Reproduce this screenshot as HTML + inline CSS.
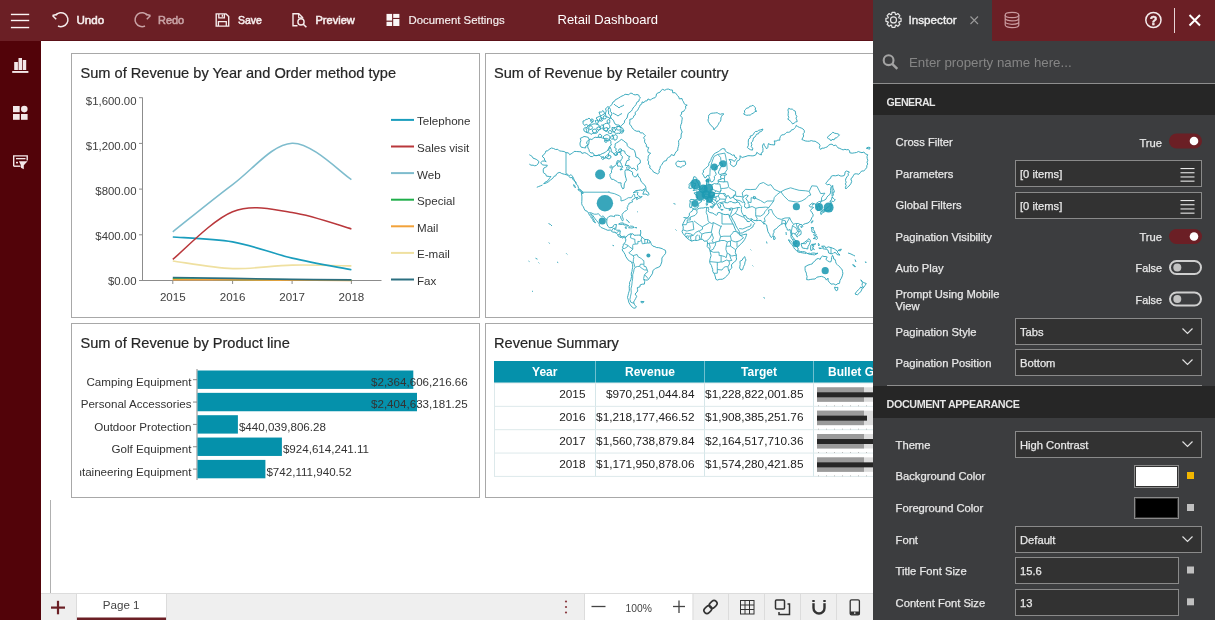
<!DOCTYPE html>
<html><head><meta charset="utf-8"><style>
html,body{margin:0;padding:0;width:1215px;height:620px;overflow:hidden;background:#fff}
svg{display:block;will-change:transform}
</style></head><body>
<svg width="1215" height="620" viewBox="0 0 1215 620" font-family="Liberation Sans">
<rect x="0" y="0" width="1215" height="620" fill="#ffffff" /><rect x="0" y="0" width="1215" height="41" fill="#6b1f25" /><rect x="41" y="40" width="832" height="1" fill="#5c1219" /><rect x="0" y="41" width="41" height="579" fill="#520309" />
<rect x="10.9" y="13.75" width="18.3" height="1.4" fill="#fbf5f5" />
<rect x="10.9" y="19.8" width="18.3" height="1.4" fill="#fbf5f5" />
<rect x="10.9" y="26.85" width="18.3" height="1.4" fill="#fbf5f5" />
<path d="M55.5 15.2 A7 7 0 1 1 58 26" fill="none" stroke="#f5ecec" stroke-width="1.5"/>
<path d="M52.5 15.5 L56.2 19.2 M52.5 15.5 L57.3 14.3" fill="none" stroke="#f5ecec" stroke-width="1.5"/>
<text x="76.5" y="24.2" font-family="Liberation Sans" font-size="11.6" fill="#f5ecec" font-weight="normal" text-anchor="start" stroke="#f5ecec" stroke-width="0.55">Undo</text>
<path d="M147.5 15.2 A7 7 0 1 0 145 26" fill="none" stroke="#c9a3a6" stroke-width="1.5"/>
<path d="M150.5 15.5 L146.8 19.2 M150.5 15.5 L145.7 14.3" fill="none" stroke="#c9a3a6" stroke-width="1.5"/>
<text x="158" y="24.2" font-family="Liberation Sans" font-size="10.95" fill="#c9a3a6" font-weight="normal" text-anchor="start" stroke="#c9a3a6" stroke-width="0.55">Redo</text>
<path d="M216.2 13.9 H226 L228.7 16.6 V26.1 H216.2 Z" fill="none" stroke="#f5ecec" stroke-width="1.4"/>
<path d="M218.8 14 V17.9 H224.4 V14" fill="none" stroke="#f5ecec" stroke-width="1.3"/>
<rect x="221.7" y="14.6" width="1.4" height="2.2" fill="#f5ecec" />
<path d="M218.4 26.1 V21.7 H226.3 V26.1" fill="none" stroke="#f5ecec" stroke-width="1.3"/>
<text x="238" y="24.2" font-family="Liberation Sans" font-size="10.5" fill="#f5ecec" font-weight="normal" text-anchor="start" stroke="#f5ecec" stroke-width="0.55">Save</text>
<path d="M297.5 25.7 H293 V13.8 H298.8 L302.6 17.6 V18.6" fill="none" stroke="#f5ecec" stroke-width="1.4"/>
<path d="M298.6 14 V17.8 H302.4" fill="none" stroke="#f5ecec" stroke-width="1.1"/>
<circle cx="301" cy="21.9" r="3.1" fill="none" stroke="#f5ecec" stroke-width="1.4"/>
<path d="M303.3 24.2 L306.4 27.2" stroke="#f5ecec" stroke-width="1.6"/>
<text x="315.5" y="24.2" font-family="Liberation Sans" font-size="11.05" fill="#f5ecec" font-weight="normal" text-anchor="start" stroke="#f5ecec" stroke-width="0.55">Preview</text>
<rect x="386.5" y="13.9" width="5.6" height="6.7" fill="#fbf6f6" />
<rect x="393.2" y="13.9" width="6.2" height="4.0" fill="#fbf6f6" />
<rect x="393.2" y="19" width="6.2" height="7" fill="#fbf6f6" />
<rect x="386.5" y="21.8" width="5.6" height="4.2" fill="#fbf6f6" />
<text x="408.5" y="24.3" font-family="Liberation Sans" font-size="11.4" fill="#f8f2f2" font-weight="normal" text-anchor="start" stroke="#f8f2f2" stroke-width="0.15">Document Settings</text>
<text x="557.5" y="23.8" font-family="Liberation Sans" font-size="13" fill="#ffffff" font-weight="normal" text-anchor="start" >Retail Dashboard</text>
<rect x="71.5" y="53.5" width="408" height="264" fill="#fff" stroke="#a8a8a8" stroke-width="1"/>
<rect x="485.5" y="53.5" width="408" height="264" fill="#fff" stroke="#a8a8a8" stroke-width="1"/>
<rect x="71.5" y="323.5" width="408" height="174" fill="#fff" stroke="#a8a8a8" stroke-width="1"/>
<rect x="485.5" y="323.5" width="408" height="174" fill="#fff" stroke="#a8a8a8" stroke-width="1"/>
<line x1="50.5" y1="500" x2="50.5" y2="593" stroke="#b0b0b0" stroke-width="1" />
<text x="80.5" y="77.8" font-family="Liberation Sans" font-size="14.6" fill="#262626" font-weight="normal" text-anchor="start" stroke="#262626" stroke-width="0.2">Sum of Revenue by Year and Order method type</text>
<text x="494" y="77.8" font-family="Liberation Sans" font-size="14.6" fill="#262626" font-weight="normal" text-anchor="start" stroke="#262626" stroke-width="0.2">Sum of Revenue by Retailer country</text>
<text x="80.5" y="347.8" font-family="Liberation Sans" font-size="14.6" fill="#262626" font-weight="normal" text-anchor="start" stroke="#262626" stroke-width="0.2">Sum of Revenue by Product line</text>
<text x="494" y="347.8" font-family="Liberation Sans" font-size="14.6" fill="#262626" font-weight="normal" text-anchor="start" stroke="#262626" stroke-width="0.2">Revenue Summary</text>
<defs><clipPath id="mapclip"><rect x="486" y="88" width="387" height="229"/></clipPath></defs>
<g clip-path="url(#mapclip)" fill="none" stroke="#33a6bb" stroke-width="0.95" stroke-linejoin="round">
<path d="M540.6 162.7L542.5 161.1L544.4 161.0L546.2 161.6L544.6 160.3L544.3 158.2L542.0 156.2L543.9 154.7L545.3 152.8L545.9 151.0L547.8 150.7L549.0 149.5L551.4 148.0L553.6 148.5L555.6 149.5L557.8 149.3L559.4 150.9L561.7 151.2L564.1 151.5L566.0 152.7L568.3 152.8L569.7 154.7L571.1 153.8L572.5 153.1L574.1 151.4L576.3 151.5L579.1 151.7L581.0 151.8L581.9 153.4L584.8 152.6L586.7 153.5L588.5 154.7L590.1 156.3L592.3 156.7L593.7 155.6L595.3 155.5L597.0 155.7L598.9 154.9L600.6 156.4L602.6 157.5L604.5 158.4L606.4 157.5L608.3 156.5L608.7 154.8L608.5 153.1L610.0 151.7L608.3 149.7L610.2 148.3L609.7 146.6L610.6 148.2L611.3 149.8L611.1 151.7L613.0 152.5L613.9 154.4L615.8 155.7L616.6 153.8L618.1 152.3L621.0 152.8L620.7 154.8L622.4 156.5L622.1 158.5L621.1 159.8L620.5 161.3L617.5 160.6L616.6 162.6L616.2 164.7L615.0 165.9L613.4 166.7L612.4 168.5L611.5 170.4L611.5 172.7L609.9 174.3L610.1 176.5L611.5 179.3L613.5 179.4L615.1 180.5L616.8 181.3L618.1 182.7L621.1 182.9L621.0 184.6L621.3 186.2L622.7 188.8L624.0 188.2L624.1 186.0L624.4 183.8L625.2 182.1L626.4 180.5L626.2 178.7L625.6 177.0L625.2 175.0L625.0 172.9L624.9 171.3L625.6 169.8L628.5 170.0L630.8 171.0L632.7 172.4L632.4 174.1L633.3 175.6L634.6 177.0L636.5 176.5L637.8 173.7L637.9 175.5L638.8 177.0L640.1 178.3L640.5 180.0L641.6 182.2L643.0 183.5L644.5 184.7L645.3 186.1L646.1 187.5L644.7 188.7L642.1 190.5L640.5 190.0L638.8 190.3L636.0 190.6L634.4 191.6L633.2 192.9L635.0 192.2L636.9 191.9L638.1 192.5L637.4 193.8L637.6 195.0L638.8 196.1L640.7 196.9L642.1 196.5L641.2 197.5L638.8 198.3L636.7 199.6L636.5 198.3L637.9 197.3L635.5 197.7L634.1 198.8L632.5 199.6L631.9 200.9L632.7 201.9L631.3 202.4L628.9 203.4L628.8 204.7L627.5 205.8L627.8 206.5L627.1 207.7L627.5 209.5L626.6 210.4L624.7 211.4L623.3 212.8L622.1 214.5L622.2 216.2L622.8 217.8L623.3 219.4L622.9 220.7L622.2 220.7L621.6 219.6L620.8 218.0L620.7 216.7L619.5 215.5L617.7 215.2L615.3 215.2L614.4 215.6L614.6 216.7L613.4 216.5L612.0 216.0L610.1 216.0L608.7 216.9L607.1 218.2L606.9 219.9L606.7 221.9L606.9 224.0L607.8 226.2L609.2 227.5L610.0 227.8L612.0 227.4L613.0 227.0L613.5 225.4L614.4 224.7L616.6 224.5L616.2 226.0L616.0 227.7L615.6 229.5L616.7 230.2L619.4 230.2L620.3 230.9L620.0 232.9L619.8 234.8L621.0 236.1L621.9 236.9L623.3 236.4L624.6 236.3L625.7 237.1L625.3 238.4L624.8 237.4L623.7 236.8L622.9 238.2L621.6 237.5L620.0 237.2L617.9 235.8L617.8 234.6L616.2 233.0L614.4 232.4L612.5 231.9L610.3 230.0L607.8 230.3L605.4 229.3L603.1 228.3L601.1 227.5L599.4 225.8L599.3 224.2L598.3 222.7L596.5 220.5L595.1 218.8L594.0 217.2L592.5 215.1L590.6 213.6L591.2 215.4L592.3 216.7L593.0 218.3L594.2 220.4L594.8 221.9L595.6 222.8L594.8 222.5L593.1 221.1L592.9 219.4L591.2 218.0L590.9 216.7L589.5 215.2L588.7 213.6L588.3 212.8L587.1 211.2L585.1 210.5L583.9 208.2L583.4 206.8L582.2 205.3L581.7 203.7L581.8 201.6L581.9 199.0L581.9 196.1L581.3 193.1L583.1 193.5L582.9 192.1L581.3 190.3L578.6 188.5L578.2 187.0L577.7 185.3L576.3 184.3L575.8 183.0L574.4 180.5L572.8 179.5L572.5 177.6L570.2 177.6L568.7 176.4L567.4 175.0L564.5 174.3L561.7 173.5L559.9 172.4L558.0 172.9L556.5 174.0L555.8 175.8L554.0 176.3L552.8 178.3L550.5 180.0L548.6 181.7L546.2 183.0L543.7 183.8L544.7 182.5L546.2 181.7L548.1 180.5L549.5 178.3L550.9 176.5L549.5 176.5L546.4 176.1L545.8 174.3L543.4 172.7L543.2 169.8L543.8 168.1L545.2 167.4L546.7 166.7L547.3 165.2L544.8 165.2L542.5 164.9L540.6 162.7ZM629.9 121.6L629.8 119.4L632.1 118.8L633.3 117.5L633.8 115.8L635.4 114.7L635.1 112.4L636.5 111.2L637.9 109.9L638.6 108.2L639.5 106.7L640.1 105.0L641.9 103.9L642.1 101.9L644.0 102.6L645.2 100.9L646.9 101.0L648.0 98.9L650.1 100.1L651.5 99.2L653.1 98.2L655.1 97.7L656.1 96.2L656.5 93.9L658.0 92.9L659.9 92.3L660.9 90.7L662.7 89.3L664.7 90.3L666.5 89.3L668.3 89.0L670.3 89.9L672.5 90.1L672.7 92.8L675.2 92.7L676.4 94.1L677.5 95.6L678.8 97.0L679.3 98.9L682.0 98.5L682.5 100.4L683.5 101.8L684.1 103.6L685.4 104.6L687.2 105.2L685.5 106.1L685.8 108.5L684.6 109.7L683.8 111.3L681.6 112.0L681.6 114.0L680.2 115.7L682.3 117.6L682.1 119.4L681.8 121.1L681.7 122.9L680.9 124.7L680.5 126.4L680.6 128.2L681.4 130.1L682.2 132.0L681.2 134.0L681.1 136.0L681.0 137.8L680.0 139.3L678.5 140.7L678.7 142.6L678.8 144.4L678.4 146.4L677.8 148.3L677.8 150.3L676.0 151.7L675.0 153.6L674.1 155.6L671.3 154.6L670.3 156.5L668.5 157.4L667.0 158.6L666.5 160.6L664.2 161.1L662.8 162.9L661.8 164.8L660.4 166.2L660.0 168.4L659.0 170.4L659.3 172.5L657.6 173.9L656.2 173.3L653.4 172.0L652.7 170.5L651.5 169.4L649.7 168.0L650.1 165.8L648.3 164.2L648.7 161.8L647.7 160.1L648.2 158.2L648.2 156.1L649.4 154.6L650.6 153.1L648.3 152.6L647.7 150.3L648.7 147.5L646.4 146.8L646.3 144.4L645.0 142.9L644.5 141.2L644.8 139.4L643.5 137.9L645.4 135.6L644.0 134.2L642.6 132.9L640.3 132.9L639.3 131.1L636.8 131.3L634.6 130.3L633.2 129.1L632.1 127.7L631.3 126.1L629.6 124.1L629.9 121.6ZM637.9 169.4L636.5 170.6L635.2 169.1L633.8 168.1L631.8 168.8L630.3 167.1L628.9 165.4L627.1 165.5L625.2 165.6L626.1 162.9L627.0 160.6L629.4 159.9L628.6 158.1L629.9 156.5L628.0 156.0L626.6 154.7L625.1 153.2L624.7 151.2L622.5 150.6L620.5 151.7L618.7 152.3L617.1 152.2L615.8 150.6L616.2 148.5L614.4 147.5L615.2 145.9L615.1 143.9L616.7 142.8L618.2 141.9L619.5 140.9L621.3 139.4L623.3 140.5L625.1 142.1L627.1 143.5L627.1 145.6L628.4 146.8L629.8 147.9L631.3 148.9L633.3 149.4L634.6 150.9L635.5 153.9L635.9 157.0L638.0 157.9L639.8 159.4L640.4 161.1L640.2 163.1L638.5 164.1L637.4 165.5L637.6 167.3L637.9 169.4ZM622.8 167.3L621.1 166.9L619.5 166.1L617.7 166.2L617.4 164.3L617.7 162.3L619.5 161.8L620.9 162.9L621.4 164.5L622.8 167.3ZM622.4 169.4L620.0 170.0L621.0 168.4L622.4 169.4ZM642.8 194.2L645.9 194.1L648.2 195.4L649.0 194.3L648.2 192.2L646.3 191.2L645.9 188.5L644.5 190.0L643.3 192.9L642.8 194.2ZM582.5 193.2L580.5 191.9L579.3 190.6L577.8 189.6L579.1 189.6L581.5 191.5L582.5 193.2ZM575.4 187.8L574.0 186.2L573.5 184.7L574.7 185.4L575.4 187.8ZM618.6 224.1L620.5 223.1L623.0 222.9L624.4 224.0L626.1 224.5L628.8 225.8L625.6 226.1L624.4 225.0L622.8 224.3L621.0 224.4L618.6 224.1ZM628.6 227.6L630.4 226.1L632.7 226.3L634.3 227.4L631.8 228.0L630.8 227.9L628.6 227.8L628.6 227.6ZM624.9 227.7L626.8 228.0L626.1 228.2L624.9 227.7ZM635.3 227.5L636.8 227.7L636.0 228.0L635.3 227.5ZM675.9 162.9L677.8 160.9L680.1 161.6L682.5 161.3L684.9 161.1L685.8 164.1L684.4 165.6L682.4 166.1L680.9 167.5L679.2 166.7L677.4 166.7L675.9 164.3L675.9 162.9ZM708.4 121.6L708.0 119.9L708.6 118.3L708.5 116.7L708.8 115.1L710.2 113.8L711.9 113.2L713.7 113.1L715.4 112.9L717.2 112.7L718.8 113.7L720.4 114.3L722.2 113.7L723.9 114.0L722.4 115.0L721.6 116.4L720.9 117.9L720.9 119.8L720.4 121.3L719.2 122.5L718.5 124.2L717.5 125.7L716.5 127.2L714.9 128.3L714.0 129.9L713.5 128.0L712.4 126.5L710.8 125.4L709.8 123.9L708.4 121.6ZM747.4 147.5L748.9 148.8L750.7 149.8L752.5 150.1L752.7 148.2L751.2 146.6L751.8 144.6L751.1 142.8L752.6 141.4L753.1 139.7L753.5 137.8L755.0 137.0L755.8 135.6L756.6 134.1L758.5 133.8L759.2 132.1L760.9 131.6L762.3 130.7L762.9 129.0L760.8 129.8L758.7 130.3L757.3 131.4L755.4 131.5L754.2 132.8L753.3 134.6L752.0 135.6L750.2 136.0L750.3 137.9L748.6 139.2L748.3 141.0L748.3 142.8L748.4 145.3L747.4 147.5ZM743.6 114.0L745.2 114.8L746.8 115.3L748.5 115.1L750.2 115.1L751.7 113.9L753.5 113.2L754.8 111.6L756.8 111.2L755.1 110.1L755.6 107.8L754.2 106.6L753.0 105.2L751.5 106.0L749.6 106.3L748.6 107.9L746.7 108.1L745.5 109.5L744.4 110.8L744.7 112.7L743.6 114.0ZM787.8 119.2L789.3 120.0L790.4 121.3L791.6 122.4L792.5 123.9L794.1 123.2L795.5 122.0L797.2 121.6L796.8 119.9L796.0 118.2L796.9 116.3L795.7 114.7L795.6 112.9L795.3 111.2L793.7 110.4L792.3 109.1L790.3 109.1L788.7 108.3L787.9 110.0L788.4 111.9L788.2 113.7L788.1 115.5L788.8 117.4L787.8 119.2ZM827.3 137.8L828.6 138.7L830.1 139.4L831.0 140.9L832.0 139.4L834.1 139.8L835.0 138.1L836.7 137.8L838.1 136.3L839.5 134.9L838.0 133.9L836.2 133.5L834.5 133.2L832.9 132.2L831.5 133.6L830.0 134.9L828.4 136.1L827.3 137.8ZM866.3 148.3L868.0 147.2L870.0 147.5L869.6 149.2L868.0 148.7L866.3 148.3ZM625.7 237.1L627.1 236.2L627.5 235.3L628.9 234.5L631.3 233.5L631.3 234.8L632.7 233.6L634.1 235.3L636.5 235.2L638.3 235.1L640.2 235.1L641.2 236.7L642.1 237.2L643.7 238.6L644.9 239.5L646.8 239.5L648.7 240.0L650.1 241.2L651.0 243.3L651.5 244.7L652.9 246.1L654.9 246.7L656.7 247.6L658.3 247.6L660.0 248.0L662.3 248.7L663.7 249.6L665.3 250.2L665.8 252.0L665.4 253.7L663.7 255.6L661.9 258.0L661.9 260.0L661.8 261.9L660.9 264.4L660.0 266.4L658.1 267.4L655.7 268.3L654.3 269.4L652.9 270.5L652.6 273.2L651.0 275.9L649.9 277.2L649.1 278.7L647.7 280.1L645.4 280.0L643.6 279.2L644.7 281.3L644.4 284.1L642.2 284.2L640.2 284.9L639.9 286.9L637.4 287.5L637.4 289.4L637.9 289.8L637.1 292.0L635.0 294.0L636.7 296.3L635.7 298.4L634.6 300.4L633.6 302.0L634.3 304.2L635.3 305.6L636.5 307.0L635.0 308.2L633.2 307.9L630.8 305.7L629.9 304.2L628.9 302.6L628.5 300.9L628.1 299.2L627.5 297.5L628.0 295.4L628.5 293.3L629.0 291.7L629.4 290.1L629.3 288.2L629.2 286.3L629.7 284.5L629.5 282.7L630.2 281.2L630.9 279.7L631.2 278.1L631.6 276.4L631.3 274.8L631.4 273.0L632.0 271.3L632.2 269.5L632.6 267.8L632.7 266.1L632.5 264.4L631.3 261.7L629.4 260.9L627.8 259.7L626.8 258.0L625.7 256.4L625.2 254.6L623.8 252.3L622.1 249.9L623.0 248.5L622.5 247.1L623.3 245.7L623.2 244.3L624.2 243.7L625.6 241.4L625.8 239.1L625.3 238.4M640.9 301.4L644.0 301.6L643.0 302.9L641.2 302.6L640.9 301.4ZM693.0 209.1L694.8 209.5L696.6 209.9L697.9 208.9L699.4 208.3L701.3 208.0L703.2 208.0L705.5 207.4L707.9 207.4L708.8 207.7L708.1 208.9L708.9 209.8L708.0 210.8L709.3 212.3L711.0 212.8L712.8 213.1L714.5 214.3L716.4 215.3L717.4 214.5L717.3 213.1L719.2 212.4L722.0 213.6L723.8 214.4L725.8 214.6L728.6 214.3L729.1 215.7L730.0 218.3L731.1 220.0L731.9 221.9L732.6 223.5L733.6 225.0L734.7 228.0L735.8 230.4L737.5 232.1L739.2 233.4L740.3 235.4L742.0 235.1L743.6 234.6L746.7 234.0L746.4 235.4L745.5 237.7L744.7 239.4L743.6 241.0L741.7 243.3L740.2 244.5L738.9 246.0L737.0 247.6L735.6 249.9L735.3 252.7L736.4 255.1L736.2 257.1L736.6 259.0L735.6 260.9L734.5 262.0L733.1 262.9L731.4 264.9L731.9 267.9L730.5 269.0L729.4 270.4L729.3 273.2L727.6 274.8L726.3 276.4L724.8 277.9L722.5 279.2L720.8 279.3L719.2 279.4L717.3 280.1L715.8 279.2L715.4 277.0L714.5 274.2L712.8 271.6L712.7 269.4L712.0 267.4L711.4 265.4L710.2 263.6L709.6 261.6L710.2 258.5L711.1 255.6L710.7 254.0L710.4 252.4L710.0 250.9L709.6 249.0L708.3 247.9L707.2 246.6L707.4 244.3L707.6 241.8L706.5 241.0L704.1 241.2L702.7 239.3L700.4 239.3L697.6 240.4L695.7 240.5L694.3 240.3L691.5 241.1L689.6 240.0L687.7 238.7L686.1 237.2L684.9 235.5L682.8 233.5L682.0 231.2L683.0 229.5L683.3 227.0L682.5 225.0L683.1 223.4L683.9 221.9L684.9 219.9L686.1 218.2L687.7 217.4L689.3 215.8L689.4 213.2L690.7 212.1L692.1 211.2L693.0 209.1ZM744.8 256.6L745.2 258.3L746.0 260.0L745.0 261.9L744.7 264.3L743.6 266.4L743.1 267.9L742.7 269.5L741.0 270.1L739.6 267.9L739.9 266.2L740.2 264.4L739.9 261.4L742.2 260.1L743.2 258.1L744.8 256.6ZM693.2 208.9L694.3 208.1L696.6 208.1L698.0 207.0L698.7 205.3L698.2 204.7L699.3 202.9L701.5 201.7L701.5 200.3L702.7 199.8L704.6 200.2L705.5 199.3L706.8 198.5L708.1 199.2L708.4 200.5L709.8 201.7L711.7 203.1L713.3 204.1L713.2 206.3L714.1 206.1L714.7 204.8L714.1 204.0L715.8 204.1L714.5 202.9L712.6 201.6L711.3 199.6L710.1 198.4L710.0 197.1L711.4 196.8L712.2 197.5L713.1 199.0L715.0 200.3L716.7 201.7L716.7 203.7L717.5 204.8L718.5 206.8L718.9 208.0L719.9 208.3L720.3 206.5L721.1 206.3L719.9 204.7L720.6 203.7L722.9 203.1L723.1 204.7L723.9 206.5L724.4 207.7L725.3 208.1L727.2 208.5L729.0 208.8L731.0 208.0L732.5 208.2L732.2 210.0L731.5 211.7L730.7 214.2L729.1 215.7L731.3 216.2L731.9 217.8L733.3 220.4L734.4 222.1L735.2 224.0L735.8 225.6L736.6 227.0L737.5 228.5L738.5 230.0L739.3 231.5L739.2 233.2L740.8 233.1L742.6 232.9L744.1 231.9L745.9 231.3L747.4 230.2L749.3 229.6L750.7 228.3L752.8 227.0L753.4 225.1L754.7 223.5L753.5 222.4L751.5 221.0L751.4 219.5L750.2 220.9L749.3 221.7L747.0 221.4L746.7 219.8L745.5 219.4L744.1 217.2L743.6 215.6L745.5 215.4L746.9 217.9L749.7 219.2L751.6 218.7L753.5 220.3L756.4 220.7L758.7 220.4L761.1 220.5L762.0 221.9L762.9 222.8L764.6 223.4L763.4 223.7L765.2 223.9L766.6 225.0L766.9 227.0L767.6 230.0L767.9 231.6L768.8 233.1L769.7 234.6L770.2 236.2L771.4 237.6L773.0 235.5L773.2 233.8L774.0 232.4L773.9 230.2L775.9 229.0L777.0 227.8L778.2 226.7L780.2 225.0L781.7 224.2L783.6 223.4L784.8 223.6L785.5 225.0L785.9 226.9L787.0 228.5L787.3 230.0L788.3 230.2L790.1 229.5L790.4 231.4L791.2 234.3L790.9 236.7L791.6 238.5L792.9 240.0L793.7 242.6L795.8 244.0L796.4 243.9L795.8 241.0L794.6 239.4L792.8 237.2L791.7 235.3L792.5 233.1L793.4 233.3L794.9 233.8L795.3 234.8L796.7 235.4L797.0 237.1L798.1 236.2L798.9 235.4L800.9 234.4L801.2 232.4L800.7 230.4L798.8 228.6L797.9 227.0L798.8 225.3L800.0 224.5L801.7 224.5L802.4 225.6L803.5 224.4L805.2 223.7L808.0 223.0L810.4 220.9L811.3 219.0L811.9 217.5L813.0 216.2L813.1 214.5L811.8 212.3L810.5 210.6L811.9 208.5L813.6 207.5L812.1 206.8L810.3 207.1L809.2 205.6L809.9 205.1L812.2 203.1L813.5 203.5L812.5 205.3L813.5 203.5L815.4 204.1L816.2 205.9L817.1 206.9L817.4 210.0L817.6 210.7L819.9 209.9L820.2 208.1L819.3 205.9L818.4 204.4L820.4 202.9L821.4 201.2L823.5 200.6L825.9 199.3L826.8 197.3L828.2 195.7L829.7 194.6L830.5 192.9L830.6 190.7L830.6 188.5L831.4 186.2L829.6 184.3L827.3 184.7L825.6 183.4L826.8 182.2L827.8 180.9L828.9 179.3L830.6 178.3L831.1 176.4L832.9 175.6L835.7 175.8L838.6 175.0L840.1 175.9L841.9 176.1L844.2 175.6L844.9 174.0L845.0 172.1L846.5 171.0L849.4 172.0L848.1 173.4L848.4 175.2L846.9 176.9L845.8 178.8L845.5 180.5L846.2 182.2L845.4 183.9L846.2 185.6L845.4 187.3L845.8 189.0L847.5 187.2L848.9 186.2L850.8 183.8L851.7 181.4L850.8 178.8L852.0 177.9L853.2 175.9L854.5 173.9L856.7 173.8L858.8 174.3L860.3 172.7L861.6 171.0L863.8 170.9L865.4 169.4L866.8 167.3L866.8 165.6L867.7 164.1L867.0 162.2L867.8 160.3L867.2 158.4L867.0 156.6L867.7 154.7L865.4 153.9L863.9 152.0L862.0 152.7L860.1 152.2L858.3 151.5L856.5 152.5L854.5 152.8L852.2 153.2L849.8 152.8L849.6 151.0L848.4 149.5L846.7 149.8L844.9 149.3L843.1 149.9L841.4 149.2L839.8 148.4L838.0 147.9L836.9 146.5L835.7 145.0L833.8 145.7L832.0 144.2L830.1 144.4L828.5 145.3L827.3 146.9L825.4 147.5L823.9 148.2L821.9 148.1L820.7 149.5L819.4 147.7L820.0 145.3L818.8 143.5L816.9 142.4L815.1 141.2L813.2 141.2L811.3 140.6L809.4 141.2L807.3 141.2L805.2 140.9L803.5 140.2L801.9 139.5L802.7 137.8L803.7 136.0L803.0 133.9L804.4 132.3L804.2 130.3L802.9 128.9L801.2 128.0L799.4 127.4L797.7 126.5L796.3 125.2L795.8 127.0L794.5 128.2L793.5 129.5L791.4 129.9L790.6 131.5L788.8 132.3L786.9 132.2L785.4 133.7L783.8 134.7L781.7 134.9L780.5 136.4L779.8 138.2L779.8 140.2L777.9 140.1L776.1 141.1L774.2 140.9L774.8 142.9L774.5 145.0L771.8 144.7L770.0 144.5L768.5 143.5L768.0 145.3L767.9 147.3L766.6 148.9L765.6 147.1L764.4 145.5L763.8 143.5L762.7 145.1L762.5 146.8L763.0 148.6L762.9 150.3L762.9 152.0L761.1 153.1L761.5 154.9L759.7 154.4L758.2 153.4L756.8 152.3L756.1 154.6L754.0 155.7L752.1 155.9L750.2 155.7L747.9 155.7L746.0 156.4L744.1 156.9L742.2 157.5L739.9 155.7L740.2 157.9L739.4 159.9L737.0 161.1L736.6 163.0L736.1 164.9L733.8 166.7L731.4 165.4L730.2 163.8L730.9 162.0L729.0 159.4L730.9 159.7L732.8 160.1L734.2 161.6L735.5 159.8L737.0 158.2L735.0 157.2L734.2 154.9L732.4 155.3L731.0 154.2L729.5 153.4L726.7 152.3L725.3 150.8L724.8 148.9L722.5 148.6L721.0 149.5L719.6 150.7L718.2 151.7L715.4 153.1L713.7 154.3L712.6 156.2L711.4 158.3L710.7 160.6L709.7 162.0L708.8 163.4L708.8 165.2L707.3 166.9L705.5 168.4L703.2 170.4L703.6 172.0L702.4 173.6L703.4 175.2L704.6 177.7L706.0 177.7L706.7 176.0L708.4 175.2L709.0 176.8L709.8 178.8L710.5 181.4L711.9 182.0L713.9 180.5L714.5 178.5L714.3 176.5L716.2 174.6L715.8 172.9L714.9 171.4L715.0 168.8L715.8 166.9L717.8 166.5L719.3 164.6L719.6 162.3L722.3 163.6L722.3 166.2L720.5 167.5L719.7 169.5L718.7 171.4L718.5 173.3L720.0 174.6L722.5 173.7L725.3 173.3L726.9 174.5L724.8 175.2L722.6 175.0L720.6 175.8L720.6 177.6L721.3 179.3L718.2 180.0L718.2 181.4L718.4 182.7L717.1 183.8L716.0 184.0L714.5 183.5L711.8 184.8L709.8 184.3L708.8 184.7L708.7 182.0L708.8 180.3L708.4 178.6L706.2 180.0L706.5 182.5L706.5 185.3L705.1 185.4L703.2 186.4L702.4 188.4L701.3 188.8L700.0 189.4L699.9 190.5L698.5 191.3L697.4 191.8L696.7 191.2L697.1 192.6L694.1 192.9L694.6 193.9L696.1 194.6L697.4 196.4L697.6 198.1L697.1 199.7L694.7 199.8L692.9 199.6L691.0 199.4L689.8 200.3L690.2 202.2L689.9 204.0L689.6 205.7L690.1 207.7L691.5 207.5L692.6 208.3L693.2 208.9ZM529.3 164.1L531.0 165.2L533.1 165.2L534.7 165.8L536.4 165.4L538.1 163.8L539.0 161.6L536.8 159.7L535.0 158.8L533.1 158.2L532.3 156.6L530.8 155.6L529.3 154.7M724.8 202.6L725.4 199.7L726.4 197.3L727.4 195.7L728.6 195.7L730.0 198.4L731.9 197.7L732.8 197.3L734.2 195.0L735.4 194.7L733.3 197.1L734.2 198.7L736.1 199.8L737.7 202.1L735.2 202.9L732.8 202.5L731.4 201.6L729.5 201.7L727.6 202.8L724.8 202.6ZM742.7 198.3L744.6 195.7L746.7 195.0L748.3 195.7L746.7 197.5L745.8 198.4L746.9 200.1L748.0 201.6L748.2 203.5L749.1 204.6L749.2 207.4L746.4 208.1L744.7 207.0L744.5 205.5L745.0 203.7L744.1 201.7L743.1 200.3L742.7 198.3ZM753.5 196.4L755.8 197.1L754.9 199.0L753.5 198.4L753.5 196.4ZM693.1 190.6L695.2 190.2L697.6 189.7L699.8 189.0L700.1 186.7L698.8 185.8L698.4 183.8L697.0 182.0L696.4 180.5L696.8 178.6L695.4 176.8L693.8 176.8L693.2 179.2L692.7 180.9L693.3 182.5L694.0 183.4L695.6 183.2L695.4 184.3L695.7 185.8L694.1 185.8L694.6 187.3L693.6 188.1L695.4 188.5L694.3 189.1L693.1 190.6ZM692.9 187.5L692.7 185.0L693.2 183.8L692.7 182.7L690.5 182.7L689.1 184.3L689.3 185.8L688.8 188.1L691.0 188.4L692.9 187.5ZM707.3 200.3L707.5 201.6L707.1 202.4L706.6 201.6L707.3 200.3ZM707.1 202.6L707.7 203.5L707.4 205.1L706.4 205.3L706.2 203.1L707.1 202.6ZM710.2 206.4L713.2 206.2L712.7 208.1L710.2 207.0L710.2 206.4ZM720.6 209.3L723.2 209.7L721.5 210.2L720.6 209.3ZM728.9 210.0L730.9 209.3L730.3 210.4L728.9 210.0ZM773.5 237.2L773.9 235.9L775.4 238.1L774.8 239.4L773.7 239.5L773.5 237.2ZM830.1 202.2L831.5 201.0L833.4 201.6L835.3 200.0L834.3 199.0L832.0 197.1L831.5 199.7L830.1 201.0L830.1 202.2ZM821.5 211.2L823.5 210.6L825.7 210.5L827.1 211.0L829.2 210.3L830.9 209.2L830.9 206.5L832.0 204.7L831.5 202.5L830.1 203.2L830.0 205.3L828.7 206.9L827.1 207.5L825.9 209.2L823.5 209.5L821.9 210.6L821.5 211.2ZM820.7 211.7L822.3 211.6L821.9 214.0L820.9 214.5L820.5 212.6L820.7 211.7ZM823.0 212.0L824.7 211.0L825.1 211.4L823.5 212.5L823.0 212.0ZM832.0 196.4L833.4 195.3L832.9 192.2L834.3 192.2L834.1 190.5L833.3 188.9L832.8 187.2L832.7 185.4L831.8 187.8L832.2 190.0L832.0 192.2L832.1 194.3L832.0 196.4ZM811.5 223.2L813.1 220.9L812.7 220.6L811.3 222.2L811.5 223.2ZM800.7 226.5L802.4 225.9L802.8 226.4L801.5 227.8L800.7 226.5ZM811.3 227.5L813.4 227.5L813.2 229.5L814.4 231.0L815.1 232.9L812.2 232.1L811.8 230.9L811.8 229.2L811.3 227.5ZM813.2 238.6L815.1 237.4L816.9 236.2L817.4 238.6L816.5 239.5L815.1 238.6L813.2 238.6ZM813.6 234.3L815.1 233.8L816.5 234.8L814.6 236.2L813.6 234.3ZM801.0 243.8L801.7 246.1L802.4 248.0L804.0 248.3L805.7 248.5L807.7 249.0L808.0 246.6L809.4 244.3L810.0 242.4L810.4 240.5L809.0 238.6L807.1 240.3L804.7 242.2L802.8 243.5L801.0 243.8ZM788.1 239.9L790.1 240.3L791.3 241.7L792.7 243.0L794.3 244.7L796.1 246.1L798.1 248.0L798.0 250.7L796.7 250.7L794.7 249.0L793.8 247.6L793.0 246.1L791.3 243.6L789.9 242.6L789.3 241.0L788.1 239.9ZM797.4 251.6L798.9 250.9L800.6 251.5L802.4 251.7L804.4 251.7L806.1 252.5L806.1 253.4L804.5 253.2L802.8 252.9L800.7 252.5L798.6 252.2L797.4 251.6ZM806.6 253.0L807.5 253.5L809.4 253.2L810.4 253.5L812.2 253.1L814.1 253.0L816.0 253.5L817.9 253.2L816.0 254.2L814.6 254.9L812.2 254.6L810.4 254.5L808.0 253.7L806.6 253.0ZM810.8 250.4L810.6 248.0L810.8 245.2L811.6 244.4L813.7 244.2L815.8 243.8L814.4 244.6L812.7 244.7L811.8 245.4L814.1 246.0L812.5 246.9L813.3 248.4L814.4 249.6L812.7 248.5L811.8 250.5L810.8 250.4ZM818.4 243.3L819.3 244.3L818.8 246.0L818.4 244.7L818.4 243.3ZM818.8 248.0L821.5 248.3L819.8 248.6L818.8 248.0ZM821.6 246.3L824.5 246.0L825.9 248.3L828.2 246.8L831.0 247.6L832.6 248.2L834.2 248.8L835.6 249.8L837.4 251.0L837.6 252.7L838.9 253.8L840.0 255.1L837.1 254.6L835.7 252.7L833.9 252.6L832.9 253.7L831.0 253.8L828.7 253.0L828.0 250.1L826.5 249.4L824.9 249.0L823.3 249.0L822.6 247.8L823.5 247.4L821.6 246.3ZM838.1 250.4L839.7 249.5L841.4 249.2L840.4 250.9L838.1 250.4ZM805.2 266.4L805.8 266.4L808.0 265.1L810.4 264.4L812.2 263.9L813.5 261.9L814.6 261.4L816.5 259.0L818.4 258.5L820.2 259.4L820.9 257.5L822.6 256.0L824.0 256.5L826.3 256.6L827.2 256.9L825.9 259.4L827.5 260.7L829.3 261.8L830.9 261.8L831.5 259.7L831.6 257.5L832.5 255.3L833.4 257.0L833.7 259.0L835.1 259.5L835.6 261.4L836.0 263.4L837.3 264.6L838.6 265.9L840.3 267.4L841.3 268.7L842.3 270.0L842.5 271.6L842.9 273.2L842.3 275.9L841.4 278.1L840.0 280.4L839.5 283.3L837.1 283.9L835.9 285.1L833.9 283.9L831.0 284.1L829.9 282.9L828.2 280.9L828.0 278.1L826.3 280.1L825.4 278.1L823.6 277.1L821.6 276.4L819.3 276.7L816.9 277.2L815.1 279.0L812.9 279.1L810.8 279.4L808.7 279.8L806.6 279.6L807.1 276.4L806.5 274.8L806.4 273.2L805.2 270.5L805.0 268.5L805.2 266.4ZM834.5 287.2L836.2 287.5L837.9 287.4L837.6 290.1L836.2 290.8L835.0 289.0L834.5 287.2ZM860.8 279.8L862.5 281.5L863.8 282.7L866.3 283.5L864.9 285.7L863.0 288.2L862.7 286.0L861.9 285.3L862.5 282.7L861.5 281.3L860.8 279.8ZM860.8 286.9L862.3 288.2L861.1 291.1L859.2 293.3L857.4 294.8L855.0 294.0L856.7 291.4L858.1 290.1L859.5 288.8L860.8 286.9ZM852.7 264.6L854.3 265.3L855.5 266.7L855.0 266.9L853.6 266.0L852.7 264.6ZM865.2 261.9L866.3 262.2L865.8 262.7L865.2 261.9ZM542.5 185.0L540.6 185.8L538.7 186.5L536.8 187.3M548.5 223.5L550.5 224.5L552.0 226.0M612.5 245.3L614.0 245.8M548.8 242.5L549.6 243.6M566.3 253.4L567.3 254.4M557.0 262.0L558.2 262.6M535.5 258.2L537.5 259.2M528.5 261.0L529.5 261.6M538.5 262.5L539.3 263.3M532.0 291.1L533.0 291.5M673.5 203.5L675.5 204.2M683.5 217.5L686.0 217.8M675.5 229.5L676.5 230.5M752.5 265.5L753.3 266.3M750.5 249.5L751.3 250.3M766.5 241.5L767.0 243.5M848.0 253.0L850.0 253.6L852.0 254.5L853.5 255.3L855.0 256.0M855.0 259.5L856.0 262.0M763.5 297.5L765.0 298.3M786.0 232.0L786.3 235.0M637.0 211.5L637.8 212.0M626.0 219.5L628.0 221.0L629.5 223.0M640.5 230.0L640.8 233.0L640.2 235.5M610.5 106.0L612.0 104.2L613.0 102.0L614.5 101.3L615.4 99.7L617.0 99.0L618.7 98.0L620.3 96.9L622.0 96.0L623.6 95.4L625.1 94.3L627.0 94.5L628.8 94.8L630.2 93.2L632.0 93.3L633.5 94.5L635.2 94.9L637.0 94.5L638.8 95.1L639.4 96.8L640.5 98.0L639.2 99.2L639.0 101.0L636.9 102.2L636.0 104.5L634.6 106.3L633.0 108.0L632.3 109.6L631.4 111.0L630.0 112.0L628.1 113.6L627.5 116.0L627.0 118.0L625.5 119.5L624.5 120.9L624.4 122.8L623.0 124.0L621.7 125.2L620.5 126.5L619.1 125.0L617.0 125.0L615.0 124.0L614.0 122.0L613.5 120.3L612.0 119.3L611.0 118.0L610.3 115.6L608.5 114.0L608.6 112.0L608.0 110.0L608.8 107.7L610.5 106.0ZM614.0 104.0L615.1 105.2L616.5 106.0L617.9 106.8L619.0 108.0L620.5 106.7L622.3 106.0L624.0 105.0M613.0 113.0L614.7 114.0L616.4 114.9L618.0 116.0L619.9 114.6L622.0 113.5M605.5 109.0L606.6 107.6L608.0 106.5L609.5 107.8L610.5 109.5L610.2 111.4L612.0 113.0L611.5 115.0L610.3 116.8L610.0 119.0L608.8 117.5L607.0 117.0L605.6 115.2L605.5 113.0L606.3 111.0L605.5 109.0ZM612.0 127.5L613.7 127.5L615.5 127.5L617.0 126.5L618.7 126.5L620.4 126.9L622.0 127.5L623.2 129.2L624.0 131.0L621.5 131.5L620.0 133.5L618.3 133.2L616.6 133.4L615.0 133.0L613.4 131.8L612.0 130.5L612.0 127.5ZM603.0 125.0L604.6 124.1L606.1 123.2L608.0 123.5L609.6 125.2L610.0 127.5L608.0 128.9L607.0 131.0L604.9 130.6L603.0 129.5L603.8 127.2L603.0 125.0ZM587.0 127.0L588.3 125.8L589.8 125.1L591.5 124.8L593.0 124.0L595.1 123.8L597.0 124.4L599.0 125.0L599.3 127.4L601.0 129.0L599.2 129.8L597.9 131.3L597.0 133.0L594.9 133.3L592.8 133.3L591.0 134.5L589.7 133.0L587.7 132.8L586.0 132.0L586.7 130.4L585.9 128.5L587.0 127.0ZM583.0 121.0L584.7 120.6L586.0 119.4L587.7 119.2L589.0 118.0L590.6 119.7L592.5 121.0L591.6 123.0L590.0 124.5L588.3 125.6L586.2 124.4L584.5 125.5L583.1 123.5L583.0 121.0ZM596.0 118.0L598.0 117.0L600.0 116.0L601.2 117.3L602.0 119.0L600.2 120.6L598.0 121.5L597.4 119.5L596.0 118.0ZM599.0 112.0L601.3 112.1L603.0 110.5L604.1 112.1L604.5 114.0L602.6 114.8L601.0 116.0L599.7 114.2L599.0 112.0ZM580.3 138.3L582.2 137.5L584.0 136.5L586.2 136.8L588.3 137.4L589.2 139.6L589.0 142.0L588.7 143.8L587.8 145.3L585.8 146.1L585.6 148.0L583.4 147.6L581.2 147.2L580.1 145.2L580.0 143.0L580.9 140.7L580.3 138.3ZM590.0 139.0L591.9 139.5L593.5 138.2L595.1 137.2L597.0 137.5L598.8 137.2L600.6 137.3L602.3 138.0L604.0 138.5L606.2 138.3L608.1 139.0L610.0 140.0L610.9 141.5L610.8 143.4L611.4 145.0L609.7 146.3L608.8 148.1L608.0 150.0L606.8 151.1L605.4 152.1L604.0 153.0L602.2 153.6L600.6 154.5L598.8 155.1L597.0 155.5L595.2 155.6L593.8 154.6L592.8 152.8L591.0 153.0L589.4 151.7L589.0 149.7L588.0 148.0L587.7 146.3L587.6 144.5L586.5 143.0L587.3 141.3L588.5 140.1L590.0 139.0ZM603.0 137.0L604.8 135.4L607.0 134.5L608.6 135.3L610.0 136.5L609.6 138.8L609.0 141.0L607.0 140.2L605.0 141.0L604.6 138.7L603.0 137.0ZM612.0 135.0L614.1 135.4L616.0 134.5L617.3 136.3L617.0 138.5L615.9 140.0L614.0 140.0L613.7 138.2L613.3 136.4L612.0 135.0ZM605.0 157.0L606.5 155.7L608.0 154.5L609.4 155.4L611.0 156.0L610.7 158.0L609.0 159.0L606.9 158.2L605.0 157.0ZM589.0 130.0L587.8 132.4L585.5 131.9L584.2 131.1L583.6 128.7L585.4 127.4L587.8 128.1L589.0 130.0ZM592.6 127.5L592.0 128.9L589.9 129.7L588.8 128.2L588.9 126.5L590.0 125.9L591.5 125.8L592.6 127.5ZM596.7 131.0L595.6 132.7L594.2 132.8L592.7 132.1L592.5 129.9L594.0 129.2L595.6 129.0L596.7 131.0ZM600.4 128.5L599.3 129.8L598.1 130.1L597.2 129.3L596.6 127.9L598.2 127.0L599.5 127.0L600.4 128.5ZM603.4 126.5L603.2 127.8L601.7 128.6L600.6 127.4L600.7 125.9L601.6 125.0L603.3 125.2L603.4 126.5ZM607.7 129.5L607.2 131.3L605.4 131.2L604.2 130.3L603.6 128.8L605.6 127.9L607.2 127.5L607.7 129.5ZM612.1 132.0L611.3 133.6L609.7 133.4L608.1 132.8L608.8 131.2L609.6 130.4L611.0 130.9L612.1 132.0ZM598.3 121.5L598.0 123.2L596.7 123.6L595.7 122.2L595.2 120.6L596.6 120.2L598.1 120.3L598.3 121.5ZM603.1 119.5L602.0 121.1L600.7 121.1L599.2 120.3L599.8 118.9L600.7 117.5L601.9 118.0L603.1 119.5ZM606.3 117.5L605.3 119.0L604.1 118.8L603.0 118.1L603.3 117.0L604.1 115.7L605.5 116.0L606.3 117.5ZM609.8 121.5L609.6 123.2L608.0 123.1L607.2 122.2L607.0 120.6L608.2 119.6L609.7 119.9L609.8 121.5ZM616.0 130.0L615.0 131.2L613.6 131.9L612.8 130.6L612.3 129.4L613.7 128.7L615.1 128.8L616.0 130.0ZM621.1 128.5L620.1 129.9L618.1 130.1L616.6 129.5L616.7 127.7L618.1 126.3L619.9 126.7L621.1 128.5ZM623.5 131.5L622.4 133.1L621.2 133.2L620.1 132.3L620.2 130.9L621.2 130.1L622.8 130.1L623.5 131.5ZM593.4 120.5L593.2 121.7L591.7 122.2L590.5 121.3L590.9 119.8L591.6 118.8L593.2 119.6L593.4 120.5ZM613.4 137.5L612.8 139.0L611.6 139.3L610.7 138.3L610.7 136.9L611.6 135.7L612.8 136.3L613.4 137.5ZM602.0 136.0L601.1 137.2L599.6 137.6L598.2 136.9L598.6 135.4L599.6 134.0L601.0 134.7L602.0 136.0ZM607.3 141.0L607.0 141.9L605.7 142.4L604.6 141.7L604.9 140.5L605.6 139.6L606.8 139.9L607.3 141.0ZM621.8 150.0L620.9 151.0L619.7 151.7L618.4 150.6L618.9 149.3L619.7 149.0L621.1 148.9L621.8 150.0ZM617.8 154.0L617.1 155.2L615.7 155.1L614.6 154.7L614.3 153.5L615.6 152.6L616.9 153.0L617.8 154.0ZM604.2 158.0L604.0 158.8L602.7 159.5L601.5 158.5L602.0 157.3L602.6 156.7L603.6 156.7L604.2 158.0ZM629.3 168.0L628.9 169.3L627.7 169.6L626.9 168.6L626.5 167.3L627.7 166.8L628.8 166.9L629.3 168.0ZM612.2 167.0L611.7 168.1L610.7 167.9L609.9 167.6L610.2 166.4L610.8 165.7L611.8 166.0L612.2 167.0Z"/>
<path d="M582.9 192.2L609.0 192.2L609.0 191.6L609.4 192.6L614.3 193.6L619.1 195.7L621.0 197.3L621.0 201.0L624.2 200.1L626.6 198.8L628.3 197.7L631.3 197.7L632.0 197.1L632.7 195.4L633.6 194.5L634.6 194.5L634.8 196.8L635.5 198.0M566.0 152.7L566.0 173.7L567.8 174.3L569.2 175.8L571.1 174.6L573.0 177.0L574.9 181.4L576.3 182.5L576.3 183.5M588.4 212.9L590.7 212.6L594.2 214.2L596.8 214.2L598.4 213.6L600.3 216.0L601.7 216.7L603.1 215.8L605.0 218.3L607.1 220.0M611.8 231.4L611.8 230.6L612.8 228.7L614.7 228.2L615.5 227.5M614.7 228.2L614.7 230.1M614.6 231.5L615.8 232.7M616.4 233.0L618.8 231.1L620.3 230.9M617.9 234.6L619.8 234.9M620.6 237.5L620.9 236.1M630.9 234.2L630.4 237.7L632.7 238.7L635.0 239.4L634.8 241.0L635.2 243.3L635.6 244.1L633.2 244.3L632.7 245.4L632.8 249.2L629.9 247.1L627.7 245.3L625.6 244.4L624.3 243.9M627.7 245.3L627.5 246.6L624.7 248.5L623.0 248.4M642.1 237.2L641.2 239.5L641.4 240.3L639.3 241.6L637.9 241.3L637.9 243.8L635.6 244.1M644.7 239.6L644.9 243.3M647.7 239.8L647.3 243.0M641.4 240.3L642.3 243.8L645.4 243.4L647.3 243.0L649.6 243.1L650.0 241.2M632.8 249.2L629.9 252.1L628.9 252.6L630.4 254.2L633.2 255.6L637.1 254.5L638.3 257.0L640.7 258.0L642.1 259.5L643.8 260.7L644.0 264.2M633.2 255.6L633.8 257.4L633.4 259.7L633.2 261.9L632.3 262.7M633.2 261.9L634.1 263.9L634.6 266.4L635.3 267.2L634.1 269.0L633.6 272.1L632.7 274.8L632.7 278.1L632.2 281.5L631.8 285.1L631.0 288.8L631.3 292.7L630.4 296.8L629.9 299.6L630.8 302.2L633.8 303.4M635.3 267.2L637.4 266.5L639.5 266.4L640.5 264.2L643.8 264.2L644.2 266.5L646.0 266.7L647.2 270.0M639.5 266.4L642.1 268.5L644.4 269.9L647.2 270.0L647.9 271.8L646.0 273.0L644.4 275.0L645.9 275.9L648.3 278.9M644.4 275.0L643.6 278.7M696.8 210.0L697.1 212.9L695.0 215.4L690.3 217.0L690.3 218.5L690.3 220.0L687.2 219.9L687.2 222.5L686.3 224.7L682.5 224.7M690.3 218.1L686.1 218.1M687.2 222.5L692.9 221.4L693.8 229.5L687.7 230.9L687.0 231.2L683.0 229.8M694.0 220.9L699.6 225.2L702.4 226.8L709.7 222.5M706.6 207.8L706.2 212.5L707.4 215.3L708.1 220.9L709.7 222.5M722.0 213.9L722.0 224.0L733.3 224.0M709.7 222.5L711.7 223.5L713.4 222.6L721.1 226.5L721.1 226.0L722.0 226.0M721.1 226.5L719.6 230.0L719.2 232.9L720.6 236.7M713.4 222.6L712.6 226.0L711.3 232.2M701.9 234.1L705.1 232.9L711.3 232.2M702.4 226.8L702.5 229.2L699.4 230.9L698.7 231.0M693.3 235.4L695.7 232.4L698.7 231.0L701.9 234.1M706.5 241.0L709.8 238.1L712.1 233.8L711.3 232.2M712.1 233.8L712.6 235.8L713.5 238.1L712.1 240.5M712.1 240.5L713.5 243.1L715.9 241.9L719.2 241.2L721.1 240.5L724.4 240.5M720.6 236.7L723.9 236.2L730.5 236.2M719.2 241.2L720.6 236.7M715.9 241.9L715.1 246.1L714.0 247.1L713.5 249.0L710.0 250.9M710.0 250.9L713.5 252.3L719.0 252.1L719.2 255.6L721.1 255.6L724.8 256.6L726.2 257.8L727.2 253.2M724.4 240.5L727.4 241.9L726.2 246.3L725.9 249.4L727.2 253.2M730.5 236.2L731.4 240.5L735.2 241.9L737.8 241.4L739.9 240.6L743.6 237.7L738.9 234.3L738.0 233.4L736.1 231.4L733.3 231.6L732.8 232.9L730.5 235.3L730.5 236.2M737.0 246.8L737.0 242.4L737.8 241.4M735.3 249.5L730.5 246.1L730.5 241.0L731.4 240.5M727.4 241.9L730.5 241.0M726.2 246.3L730.5 246.1M736.5 255.1L731.4 256.1L729.5 254.2L727.2 253.2M729.5 254.2L730.9 259.0L731.9 260.4L729.0 260.9M722.0 262.2L726.7 260.0L729.0 260.9M709.6 261.6L718.1 262.4L721.1 261.9L722.0 262.2M721.1 255.6L721.1 261.9M717.3 262.4L717.3 266.4L717.3 269.5M714.0 273.3L717.3 273.2L717.3 269.5L722.0 270.0L723.9 267.4L725.8 266.6L727.9 266.8L728.6 271.0L729.4 271.5M727.9 266.8L729.5 263.9L729.0 260.9M691.5 241.1L690.5 238.1L691.0 235.8L693.3 235.4M695.7 240.5L695.9 236.2L698.0 234.8M700.0 239.5L699.0 234.9M701.0 239.2L701.9 234.1M687.7 238.7L688.2 237.2L689.1 237.2M686.1 237.2L686.8 235.8L688.6 236.2L691.0 235.8M684.9 235.5L685.5 233.2L687.7 233.4L690.5 233.8L693.3 235.4M707.6 244.3L709.1 243.1L711.0 243.1L713.5 243.1M709.1 243.1L710.2 247.1L709.6 249.0M690.1 201.6L692.4 202.2L691.9 204.7L691.5 207.5M696.8 199.8L701.5 201.1M700.9 189.1L702.4 190.8L704.2 191.5L706.2 192.2L705.5 194.2L704.1 196.1L705.1 196.5L705.5 199.3M705.5 194.2L707.4 194.2L708.4 195.3L707.0 196.7L705.1 196.5M705.1 185.4L704.2 188.1L704.1 189.7L704.2 191.5M701.7 188.8L704.1 189.3M706.7 183.2L707.8 183.4M711.8 184.8L712.2 187.0L712.6 189.3L711.9 189.3L709.9 190.3L710.7 192.8L707.9 194.3L707.4 194.2M710.7 192.8L712.6 192.2L714.5 192.8L715.9 190.8L712.6 189.3M715.9 190.8L719.6 192.1M708.4 195.3L711.3 195.7L713.7 195.3L714.5 192.8M717.1 184.0L719.9 184.0L720.6 187.8L721.1 190.0L719.6 192.1M718.2 181.4L723.4 181.9M721.3 178.3L724.4 178.8M724.8 175.2L724.4 178.8L724.8 181.4L723.4 181.9L727.6 181.7L728.6 186.2L727.6 187.8L723.9 188.4L721.1 188.4M721.1 190.0L719.6 193.4L722.9 193.6L724.8 193.4L726.7 196.7M728.6 187.3L731.4 189.3L735.6 191.5L735.6 194.3M713.7 195.3L714.5 193.6L719.6 193.4L718.2 196.1L715.4 196.7L713.7 195.3M719.9 199.0L725.3 199.3M723.4 193.4L725.0 196.4L726.4 197.3M718.2 196.1L719.6 198.4L719.9 199.0M711.3 197.1L714.0 195.7M713.3 197.5L716.4 197.7L715.4 201.0M716.8 201.0L718.2 201.2L719.9 199.0M717.3 204.5L719.2 202.8L723.0 202.0L724.8 201.6M716.7 201.7L718.2 201.2M709.8 176.1L710.0 172.4L710.2 168.4L711.7 162.9L714.0 156.5L717.8 154.4L720.6 157.5L721.1 162.3M717.8 154.4L724.8 153.1L725.8 157.0L726.7 162.9L727.2 169.4L724.6 173.3M735.6 194.3L736.1 196.4L739.9 196.4L743.1 197.1L742.2 192.9L745.5 189.3L750.2 189.6L755.8 189.3L759.6 183.8L763.4 182.5L768.1 185.4L770.9 184.7L774.2 189.3L780.3 192.1M780.3 192.1L785.0 189.6L790.6 187.8L794.4 189.0L799.1 190.3L805.7 190.8L808.5 191.3L809.2 191.5L811.8 185.8L816.9 186.2L820.7 193.6L824.9 193.2L821.6 197.7L821.4 201.2M781.0 191.9L783.6 195.7L788.7 200.7L797.2 202.2L801.9 200.9L806.1 198.4L808.5 195.7L810.8 195.0L809.2 191.5M780.3 192.1L776.5 195.0L774.2 197.7L773.7 201.0L768.8 207.5M748.1 202.2L751.1 202.5L751.1 197.7L755.8 198.4L760.5 200.5L764.3 202.9L767.1 201.0L773.7 201.0M749.2 207.4L752.1 206.5L755.8 208.3L759.1 207.5L762.0 207.4L765.7 207.1L768.8 207.5M755.7 215.8L760.5 216.2L763.8 214.0L765.2 211.2L768.8 207.5M755.8 208.3L755.7 211.2L755.7 215.8L757.2 218.5L756.4 220.7M739.9 204.5L741.7 206.5L741.3 209.5L741.7 212.3L743.6 215.6M732.3 208.9L738.0 207.5L740.3 207.6M735.2 213.4L742.2 216.7L743.6 217.2M731.4 216.2L735.2 213.4M738.0 207.5L737.0 210.6L735.2 213.4M739.2 228.5L742.7 229.0L747.4 227.0L750.7 226.0L751.1 223.5M737.7 202.1L739.4 202.8L739.9 204.5M736.1 199.8L739.9 200.7L742.7 202.5L744.1 201.7M762.9 222.2L765.2 221.4L764.3 218.0L766.2 216.2L769.0 212.9L768.5 210.0L771.6 209.5M771.6 209.5L772.8 212.9L774.6 215.6L777.5 218.3L781.2 219.4L785.0 218.0L789.7 217.8M781.7 224.2L782.2 219.9L785.5 220.9L785.5 225.0M785.5 225.0L787.3 221.9L789.7 217.8M789.7 217.8L791.1 220.9L793.6 224.4M793.6 224.4L795.3 223.5L798.6 223.5L800.0 224.5M791.2 235.8L791.6 230.0L792.5 225.7L793.6 224.4M792.5 225.7L796.3 228.2L797.7 231.4M794.9 233.8L797.7 231.4L799.5 231.4M796.3 224.0L797.2 227.5L799.5 231.4M796.7 235.4L799.5 231.4M792.6 239.1L794.4 239.5M815.4 204.1L818.8 201.6L821.4 201.2M817.4 206.8L819.1 205.8M801.5 243.4L805.7 243.8L807.1 241.4L809.1 241.2M831.0 247.6L831.0 253.8" stroke-width="0.85"/>
</g>
<g fill="#1c9ab2" fill-opacity="0.88">
<circle cx="604.9" cy="203.2" r="8.2"/>
<circle cx="600.1" cy="174.5" r="5.0"/>
<circle cx="602.3" cy="221.0" r="3.6"/>
<circle cx="648.4" cy="255.4" r="2.0"/>
<circle cx="825.2" cy="270.7" r="3.6"/>
<circle cx="796.4" cy="206.7" r="3.6"/>
<circle cx="828.6" cy="207.6" r="5.0"/>
<circle cx="819.0" cy="207.0" r="4.0"/>
<circle cx="796.4" cy="243.7" r="3.6"/>
<circle cx="695.5" cy="184.0" r="5.3"/>
<circle cx="703.2" cy="188.9" r="4.5"/>
<circle cx="708.6" cy="188.4" r="4.5"/>
<circle cx="700.3" cy="195.7" r="4.8"/>
<circle cx="706.1" cy="194.7" r="4.5"/>
<circle cx="711.5" cy="194.7" r="3.5"/>
<circle cx="709.5" cy="199.5" r="3.5"/>
<circle cx="707.6" cy="180.7" r="2.0"/>
<circle cx="695.0" cy="203.4" r="3.5"/>
<circle cx="714.4" cy="167.1" r="3.5"/>
<circle cx="723.1" cy="163.7" r="3.5"/>
</g>
<line x1="142.5" y1="97.5" x2="142.5" y2="281" stroke="#8c8c8c" stroke-width="1" />
<line x1="142" y1="280.5" x2="381.5" y2="280.5" stroke="#8c8c8c" stroke-width="1" />
<line x1="139" y1="97.69999999999999" x2="142.5" y2="97.69999999999999" stroke="#8c8c8c" stroke-width="1" />
<text x="136.5" y="105.39999999999999" font-family="Liberation Sans" font-size="11.4" fill="#404040" font-weight="normal" text-anchor="end" >$1,600.00</text>
<line x1="139" y1="143.4" x2="142.5" y2="143.4" stroke="#8c8c8c" stroke-width="1" />
<text x="136.5" y="150.4" font-family="Liberation Sans" font-size="11.4" fill="#404040" font-weight="normal" text-anchor="end" >$1,200.00</text>
<line x1="139" y1="189.1" x2="142.5" y2="189.1" stroke="#8c8c8c" stroke-width="1" />
<text x="136.5" y="195.4" font-family="Liberation Sans" font-size="11.4" fill="#404040" font-weight="normal" text-anchor="end" >$800.00</text>
<line x1="139" y1="234.8" x2="142.5" y2="234.8" stroke="#8c8c8c" stroke-width="1" />
<text x="136.5" y="240.4" font-family="Liberation Sans" font-size="11.4" fill="#404040" font-weight="normal" text-anchor="end" >$400.00</text>
<line x1="139" y1="280.5" x2="142.5" y2="280.5" stroke="#8c8c8c" stroke-width="1" />
<text x="136.5" y="285.40000000000003" font-family="Liberation Sans" font-size="11.4" fill="#404040" font-weight="normal" text-anchor="end" >$0.00</text>
<line x1="172.8" y1="280.5" x2="172.8" y2="284" stroke="#8c8c8c" stroke-width="1" />
<text x="172.8" y="301.4" font-family="Liberation Sans" font-size="11.6" fill="#404040" font-weight="normal" text-anchor="middle" >2015</text>
<line x1="232.6" y1="280.5" x2="232.6" y2="284" stroke="#8c8c8c" stroke-width="1" />
<text x="232.6" y="301.4" font-family="Liberation Sans" font-size="11.6" fill="#404040" font-weight="normal" text-anchor="middle" >2016</text>
<line x1="292.1" y1="280.5" x2="292.1" y2="284" stroke="#8c8c8c" stroke-width="1" />
<text x="292.1" y="301.4" font-family="Liberation Sans" font-size="11.6" fill="#404040" font-weight="normal" text-anchor="middle" >2017</text>
<line x1="351.4" y1="280.5" x2="351.4" y2="284" stroke="#8c8c8c" stroke-width="1" />
<text x="351.4" y="301.4" font-family="Liberation Sans" font-size="11.6" fill="#404040" font-weight="normal" text-anchor="middle" >2018</text>
<path d="M172.8 261.0 C182.8 262.2 212.7 267.9 232.6 268.6 C252.5 269.3 272.3 265.5 292.1 265.1 C311.9 264.6 341.5 265.7 351.4 265.9" fill="none" stroke="#efe0a0" stroke-width="1.6"/>
<path d="M172.8 278.8 C182.8 278.9 212.7 279.2 232.6 279.4 C252.5 279.5 272.3 279.8 292.1 279.9 C311.9 280.1 341.5 280.2 351.4 280.3" fill="none" stroke="#1fae4a" stroke-width="1.6"/>
<path d="M172.8 279.6 C182.8 279.6 212.7 279.7 232.6 279.8 C252.5 279.9 272.3 280.0 292.1 280.2 C311.9 280.3 341.5 280.4 351.4 280.5" fill="none" stroke="#f2a23a" stroke-width="1.6"/>
<path d="M172.8 277.5 C182.8 277.7 212.7 278.1 232.6 278.4 C252.5 278.7 272.3 279.1 292.1 279.4 C311.9 279.6 341.5 279.8 351.4 279.9" fill="none" stroke="#2b6f80" stroke-width="1.6"/>
<path d="M172.8 237.0 C182.8 237.8 212.7 238.4 232.6 241.9 C252.5 245.4 272.3 253.5 292.1 258.1 C311.9 262.8 341.5 267.8 351.4 269.8" fill="none" stroke="#1a9dbd" stroke-width="1.6"/>
<path d="M172.8 259.4 C182.8 251.4 212.7 219.5 232.6 211.7 C252.5 203.9 272.3 209.7 292.1 212.5 C311.9 215.4 341.5 226.1 351.4 228.9" fill="none" stroke="#b9373b" stroke-width="1.6"/>
<path d="M172.8 231.8 C182.8 224.0 212.7 199.4 232.6 184.6 C252.5 169.9 272.3 144.0 292.1 143.2 C311.9 142.3 341.5 173.5 351.4 179.6" fill="none" stroke="#7ebccd" stroke-width="1.6"/>
<line x1="391" y1="119.9" x2="414" y2="119.9" stroke="#1a9dbd" stroke-width="2" />
<text x="417" y="125.4" font-family="Liberation Sans" font-size="11.6" fill="#333333" font-weight="normal" text-anchor="start" >Telephone</text>
<line x1="391" y1="146.5" x2="414" y2="146.5" stroke="#b9373b" stroke-width="2" />
<text x="417" y="152.0" font-family="Liberation Sans" font-size="11.6" fill="#333333" font-weight="normal" text-anchor="start" >Sales visit</text>
<line x1="391" y1="173.10000000000002" x2="414" y2="173.10000000000002" stroke="#7ebccd" stroke-width="2" />
<text x="417" y="178.60000000000002" font-family="Liberation Sans" font-size="11.6" fill="#333333" font-weight="normal" text-anchor="start" >Web</text>
<line x1="391" y1="199.70000000000002" x2="414" y2="199.70000000000002" stroke="#1fae4a" stroke-width="2" />
<text x="417" y="205.20000000000002" font-family="Liberation Sans" font-size="11.6" fill="#333333" font-weight="normal" text-anchor="start" >Special</text>
<line x1="391" y1="226.3" x2="414" y2="226.3" stroke="#f2a23a" stroke-width="2" />
<text x="417" y="231.8" font-family="Liberation Sans" font-size="11.6" fill="#333333" font-weight="normal" text-anchor="start" >Mail</text>
<line x1="391" y1="252.9" x2="414" y2="252.9" stroke="#efe0a0" stroke-width="2" />
<text x="417" y="258.4" font-family="Liberation Sans" font-size="11.6" fill="#333333" font-weight="normal" text-anchor="start" >E-mail</text>
<line x1="391" y1="279.5" x2="414" y2="279.5" stroke="#2b6f80" stroke-width="2" />
<text x="417" y="285.0" font-family="Liberation Sans" font-size="11.6" fill="#333333" font-weight="normal" text-anchor="start" >Fax</text>
<line x1="197" y1="369" x2="197" y2="480" stroke="#888" stroke-width="1" />
<defs><clipPath id="c3"><rect x="80" y="324" width="399" height="173"/></clipPath></defs>
<g clip-path="url(#c3)">
<rect x="197.5" y="370.5" width="215.8" height="18.4" fill="#0591ab" />
<line x1="193" y1="379.7" x2="197" y2="379.7" stroke="#888" stroke-width="1" />
<text x="191.5" y="386.1" font-family="Liberation Sans" font-size="11.6" fill="#333333" font-weight="normal" text-anchor="end" >Camping Equipment</text>
<text x="371" y="386.1" font-family="Liberation Sans" font-size="11.6" fill="#333333" font-weight="normal" text-anchor="start" >$2,364,606,216.66</text>
<rect x="197.5" y="392.85" width="219.5" height="18.4" fill="#0591ab" />
<line x1="193" y1="402.05" x2="197" y2="402.05" stroke="#888" stroke-width="1" />
<text x="191.5" y="408.45000000000005" font-family="Liberation Sans" font-size="11.6" fill="#333333" font-weight="normal" text-anchor="end" >Personal Accessories</text>
<text x="371" y="408.45000000000005" font-family="Liberation Sans" font-size="11.6" fill="#333333" font-weight="normal" text-anchor="start" >$2,404,633,181.25</text>
<rect x="197.5" y="415.2" width="40.400000000000006" height="18.4" fill="#0591ab" />
<line x1="193" y1="424.4" x2="197" y2="424.4" stroke="#888" stroke-width="1" />
<text x="191.5" y="430.8" font-family="Liberation Sans" font-size="11.6" fill="#333333" font-weight="normal" text-anchor="end" >Outdoor Protection</text>
<text x="238.9" y="430.8" font-family="Liberation Sans" font-size="11.6" fill="#333333" font-weight="normal" text-anchor="start" >$440,039,806.28</text>
<rect x="197.5" y="437.55" width="84.39999999999998" height="18.4" fill="#0591ab" />
<line x1="193" y1="446.75" x2="197" y2="446.75" stroke="#888" stroke-width="1" />
<text x="191.5" y="453.15000000000003" font-family="Liberation Sans" font-size="11.6" fill="#333333" font-weight="normal" text-anchor="end" >Golf Equipment</text>
<text x="282.9" y="453.15000000000003" font-family="Liberation Sans" font-size="11.6" fill="#333333" font-weight="normal" text-anchor="start" >$924,614,241.11</text>
<rect x="197.5" y="459.9" width="67.89999999999998" height="18.4" fill="#0591ab" />
<line x1="193" y1="469.09999999999997" x2="197" y2="469.09999999999997" stroke="#888" stroke-width="1" />
<text x="191.5" y="475.5" font-family="Liberation Sans" font-size="11.6" fill="#333333" font-weight="normal" text-anchor="end" >Mountaineering Equipment</text>
<text x="266.4" y="475.5" font-family="Liberation Sans" font-size="11.6" fill="#333333" font-weight="normal" text-anchor="start" >$742,111,940.52</text>
</g>
<rect x="494" y="361" width="386" height="22" fill="#0591ab" />
<line x1="595.5" y1="361" x2="595.5" y2="476.5" stroke="#d5e6e9" stroke-width="1" />
<line x1="704.5" y1="361" x2="704.5" y2="476.5" stroke="#d5e6e9" stroke-width="1" />
<line x1="813.5" y1="361" x2="813.5" y2="476.5" stroke="#d5e6e9" stroke-width="1" />
<line x1="595.5" y1="361" x2="595.5" y2="383" stroke="#6fc0cf" stroke-width="1" />
<line x1="704.5" y1="361" x2="704.5" y2="383" stroke="#6fc0cf" stroke-width="1" />
<line x1="813.5" y1="361" x2="813.5" y2="383" stroke="#6fc0cf" stroke-width="1" />
<line x1="494" y1="383.0" x2="873" y2="383.0" stroke="#dde9eb" stroke-width="1" />
<line x1="494" y1="406.35" x2="873" y2="406.35" stroke="#dde9eb" stroke-width="1" />
<line x1="494" y1="429.7" x2="873" y2="429.7" stroke="#dde9eb" stroke-width="1" />
<line x1="494" y1="453.05" x2="873" y2="453.05" stroke="#dde9eb" stroke-width="1" />
<line x1="494" y1="476.4" x2="873" y2="476.4" stroke="#dde9eb" stroke-width="1" />
<line x1="494.5" y1="383" x2="494.5" y2="476.5" stroke="#dde9eb" stroke-width="1" />
<text x="544.75" y="376" font-family="Liberation Sans" font-size="12" fill="#ffffff" font-weight="bold" text-anchor="middle" >Year</text>
<text x="650.0" y="376" font-family="Liberation Sans" font-size="12" fill="#ffffff" font-weight="bold" text-anchor="middle" >Revenue</text>
<text x="759.0" y="376" font-family="Liberation Sans" font-size="12" fill="#ffffff" font-weight="bold" text-anchor="middle" >Target</text>
<text x="828" y="376" font-family="Liberation Sans" font-size="12" fill="#ffffff" font-weight="bold" text-anchor="start" >Bullet Graph</text>
<text x="585.5" y="397.8" font-family="Liberation Sans" font-size="11.8" fill="#222" font-weight="normal" text-anchor="end" >2015</text>
<text x="694.5" y="397.8" font-family="Liberation Sans" font-size="11.8" fill="#222" font-weight="normal" text-anchor="end" >$970,251,044.84</text>
<text x="803.5" y="397.8" font-family="Liberation Sans" font-size="11.8" fill="#222" font-weight="normal" text-anchor="end" >$1,228,822,001.85</text>
<rect x="817" y="387.3" width="56" height="14.5" fill="#dcdcdc" />
<rect x="817" y="387.3" width="47" height="14.5" fill="#9a9a9a" />
<rect x="817" y="392.3" width="56" height="5" fill="#262626" />
<rect x="818" y="405.3" width="1" height="1" fill="#bbb" />
<rect x="826" y="405.3" width="1" height="1" fill="#bbb" />
<rect x="834" y="405.3" width="1" height="1" fill="#bbb" />
<rect x="842" y="405.3" width="1" height="1" fill="#bbb" />
<rect x="850" y="405.3" width="1" height="1" fill="#bbb" />
<rect x="858" y="405.3" width="1" height="1" fill="#bbb" />
<rect x="866" y="405.3" width="1" height="1" fill="#bbb" />
<text x="585.5" y="421.15000000000003" font-family="Liberation Sans" font-size="11.8" fill="#222" font-weight="normal" text-anchor="end" >2016</text>
<text x="694.5" y="421.15000000000003" font-family="Liberation Sans" font-size="11.8" fill="#222" font-weight="normal" text-anchor="end" >$1,218,177,466.52</text>
<text x="803.5" y="421.15000000000003" font-family="Liberation Sans" font-size="11.8" fill="#222" font-weight="normal" text-anchor="end" >$1,908,385,251.76</text>
<rect x="817" y="410.65000000000003" width="56" height="14.5" fill="#dcdcdc" />
<rect x="817" y="410.65000000000003" width="47" height="14.5" fill="#9a9a9a" />
<rect x="817" y="415.65000000000003" width="50" height="5" fill="#262626" />
<rect x="818" y="428.65000000000003" width="1" height="1" fill="#bbb" />
<rect x="826" y="428.65000000000003" width="1" height="1" fill="#bbb" />
<rect x="834" y="428.65000000000003" width="1" height="1" fill="#bbb" />
<rect x="842" y="428.65000000000003" width="1" height="1" fill="#bbb" />
<rect x="850" y="428.65000000000003" width="1" height="1" fill="#bbb" />
<rect x="858" y="428.65000000000003" width="1" height="1" fill="#bbb" />
<rect x="866" y="428.65000000000003" width="1" height="1" fill="#bbb" />
<text x="585.5" y="444.5" font-family="Liberation Sans" font-size="11.8" fill="#222" font-weight="normal" text-anchor="end" >2017</text>
<text x="694.5" y="444.5" font-family="Liberation Sans" font-size="11.8" fill="#222" font-weight="normal" text-anchor="end" >$1,560,738,879.84</text>
<text x="803.5" y="444.5" font-family="Liberation Sans" font-size="11.8" fill="#222" font-weight="normal" text-anchor="end" >$2,164,517,710.36</text>
<rect x="817" y="434.0" width="56" height="14.5" fill="#dcdcdc" />
<rect x="817" y="434.0" width="47" height="14.5" fill="#9a9a9a" />
<rect x="817" y="439.0" width="56" height="5" fill="#262626" />
<rect x="818" y="452.0" width="1" height="1" fill="#bbb" />
<rect x="826" y="452.0" width="1" height="1" fill="#bbb" />
<rect x="834" y="452.0" width="1" height="1" fill="#bbb" />
<rect x="842" y="452.0" width="1" height="1" fill="#bbb" />
<rect x="850" y="452.0" width="1" height="1" fill="#bbb" />
<rect x="858" y="452.0" width="1" height="1" fill="#bbb" />
<rect x="866" y="452.0" width="1" height="1" fill="#bbb" />
<text x="585.5" y="467.85" font-family="Liberation Sans" font-size="11.8" fill="#222" font-weight="normal" text-anchor="end" >2018</text>
<text x="694.5" y="467.85" font-family="Liberation Sans" font-size="11.8" fill="#222" font-weight="normal" text-anchor="end" >$1,171,950,878.06</text>
<text x="803.5" y="467.85" font-family="Liberation Sans" font-size="11.8" fill="#222" font-weight="normal" text-anchor="end" >$1,574,280,421.85</text>
<rect x="817" y="457.35" width="56" height="14.5" fill="#dcdcdc" />
<rect x="817" y="457.35" width="47" height="14.5" fill="#9a9a9a" />
<rect x="817" y="462.35" width="56" height="5" fill="#262626" />
<rect x="818" y="475.35" width="1" height="1" fill="#bbb" />
<rect x="826" y="475.35" width="1" height="1" fill="#bbb" />
<rect x="834" y="475.35" width="1" height="1" fill="#bbb" />
<rect x="842" y="475.35" width="1" height="1" fill="#bbb" />
<rect x="850" y="475.35" width="1" height="1" fill="#bbb" />
<rect x="858" y="475.35" width="1" height="1" fill="#bbb" />
<rect x="866" y="475.35" width="1" height="1" fill="#bbb" />
<rect x="41" y="593" width="832" height="27" fill="#efefef" />
<line x1="41" y1="593.5" x2="873" y2="593.5" stroke="#dcdcdc" stroke-width="1" />
<line x1="76.5" y1="594" x2="76.5" y2="620" stroke="#dcdcdc" stroke-width="1" />
<rect x="77" y="594" width="90" height="26" fill="#ffffff" />
<rect x="77" y="617.5" width="90" height="2.5" fill="#6b1f25" />
<line x1="166.5" y1="594" x2="166.5" y2="620" stroke="#dcdcdc" stroke-width="1" />
<text x="102.8" y="609.2" font-family="Liberation Sans" font-size="11.6" fill="#444" font-weight="normal" text-anchor="start" >Page 1</text>
<rect x="51" y="606.5" width="14" height="2.2" fill="#6b1f25" />
<rect x="56.9" y="600.8" width="2.2" height="13.5" fill="#6b1f25" />
<circle cx="566" cy="601.5" r="1.1" fill="#8a3a40"/>
<circle cx="566" cy="607" r="1.1" fill="#8a3a40"/>
<circle cx="566" cy="612.5" r="1.1" fill="#8a3a40"/>
<rect x="584.5" y="594" width="108" height="26" fill="#ffffff" />
<line x1="584.5" y1="594" x2="584.5" y2="620" stroke="#dcdcdc" stroke-width="1" />
<line x1="591.5" y1="606.5" x2="605.5" y2="606.5" stroke="#444" stroke-width="1.3" />
<text x="625.5" y="612" font-family="Liberation Sans" font-size="10.3" fill="#444" font-weight="normal" text-anchor="start" >100%</text>
<line x1="673" y1="606.5" x2="685" y2="606.5" stroke="#444" stroke-width="1.3" />
<line x1="679" y1="600.5" x2="679" y2="613" stroke="#444" stroke-width="1.3" />
<line x1="693" y1="594" x2="693" y2="620" stroke="#dcdcdc" stroke-width="1" />
<line x1="728.5" y1="594" x2="728.5" y2="620" stroke="#dcdcdc" stroke-width="1" />
<line x1="764.5" y1="594" x2="764.5" y2="620" stroke="#dcdcdc" stroke-width="1" />
<line x1="800.5" y1="594" x2="800.5" y2="620" stroke="#dcdcdc" stroke-width="1" />
<line x1="836.5" y1="594" x2="836.5" y2="620" stroke="#dcdcdc" stroke-width="1" />
<g transform="translate(710.5 607) rotate(-45)" fill="none" stroke="#333" stroke-width="1.6"><rect x="-8" y="-3" width="8.5" height="6" rx="3"/><rect x="-0.5" y="-3" width="8.5" height="6" rx="3"/></g>
<g fill="none" stroke="#333" stroke-width="1"><rect x="740.5" y="600.5" width="13.5" height="13.5"/><path d="M745 600.5V614 M749.5 600.5V614 M740.5 605H754 M740.5 609.5H754"/></g>
<g fill="none" stroke="#333" stroke-width="1.5"><rect x="775.5" y="600" width="9" height="9" rx="1"/><path d="M787.5 604 H789.5 V614.5 H779 V612"/></g>
<path d="M813.5 600 V608 A5.5 5.5 0 0 0 824.5 608 V600" fill="none" stroke="#333" stroke-width="2.4"/>
<rect x="811" y="602" width="16" height="1.2" fill="#efefef" />
<g><rect x="850.2" y="599.8" width="9.2" height="15" rx="1.3" fill="none" stroke="#333" stroke-width="1.3"/><rect x="850.2" y="611.5" width="9.2" height="3.3" fill="#333"/><circle cx="854.8" cy="613.1" r="0.8" fill="#fff"/></g>
<rect x="873" y="0" width="342" height="620" fill="#3c3d3f" />
<rect x="992" y="0" width="223" height="41" fill="#6b1f25" />
<path d="M901.06 18.43 L901.06 21.37 L898.98 21.79 L898.71 22.44 L899.88 24.21 L897.81 26.28 L896.04 25.11 L895.39 25.38 L894.97 27.46 L892.03 27.46 L891.61 25.38 L890.96 25.11 L889.19 26.28 L887.12 24.21 L888.29 22.44 L888.02 21.79 L885.94 21.37 L885.94 18.43 L888.02 18.01 L888.29 17.36 L887.12 15.59 L889.19 13.52 L890.96 14.69 L891.61 14.42 L892.03 12.34 L894.97 12.34 L895.39 14.42 L896.04 14.69 L897.81 13.52 L899.88 15.59 L898.71 17.36 L898.98 18.01Z" fill="none" stroke="#e6e6e6" stroke-width="1.2" stroke-linejoin="round"/>
<circle cx="893.5" cy="19.9" r="3.0" fill="none" stroke="#e6e6e6" stroke-width="1.2"/>
<text x="908.5" y="24.3" font-family="Liberation Sans" font-size="11.7" fill="#f2f2f2" font-weight="normal" text-anchor="start" stroke="#f2f2f2" stroke-width="0.35">Inspector</text>
<path d="M970.5 16.5 L978 24 M978 16.5 L970.5 24" stroke="#9a9a9a" stroke-width="1.1"/>
<g fill="none" stroke="#c99a9e" stroke-width="1.2"><ellipse cx="1012" cy="15" rx="6.8" ry="2.6"/><path d="M1005.2 15 V25 A6.8 2.6 0 0 0 1018.8 25 V15 M1005.2 18.3 A6.8 2.6 0 0 0 1018.8 18.3 M1005.2 21.7 A6.8 2.6 0 0 0 1018.8 21.7"/></g>
<circle cx="1153.4" cy="20" r="7.6" fill="none" stroke="#f3e9ea" stroke-width="1.5"/>
<text x="1153.5" y="24.6" font-family="Liberation Sans" font-size="12.5" fill="#f3e9ea" font-weight="bold" text-anchor="middle" stroke="#f3e9ea" stroke-width="0.4">?</text>
<line x1="1174.5" y1="8" x2="1174.5" y2="33" stroke="#e7d3d5" stroke-width="1" />
<path d="M1189.5 15 L1200 25.5 M1200 15 L1189.5 25.5" stroke="#ffffff" stroke-width="2.0"/>
<circle cx="888.6" cy="60.2" r="4.9" fill="none" stroke="#a3a3a3" stroke-width="2.1"/>
<path d="M892.2 63.8 L897.3 68.9" stroke="#a3a3a3" stroke-width="2.4"/>
<text x="909" y="66.7" font-family="Liberation Sans" font-size="13.3" fill="#858585" font-weight="normal" text-anchor="start" >Enter property name here...</text>
<line x1="873" y1="83.5" x2="1215" y2="83.5" stroke="#8e8e8e" stroke-width="1" />
<rect x="873" y="84" width="342" height="31" fill="#262626" />
<text x="886.5" y="106.2" font-family="Liberation Sans" font-size="10.6" fill="#e6e6e6" font-weight="bold" text-anchor="start" letter-spacing="-0.45">GENERAL</text>
<rect x="873" y="386" width="342" height="32" fill="#262626" />
<line x1="887" y1="385.5" x2="1202" y2="385.5" stroke="#8e8e8e" stroke-width="1" />
<text x="886.5" y="408" font-family="Liberation Sans" font-size="10.8" fill="#e6e6e6" font-weight="bold" text-anchor="start" letter-spacing="-0.4">DOCUMENT APPEARANCE</text>
<text x="895.6" y="146.3" font-family="Liberation Sans" font-size="11.2" fill="#e8e8e8" font-weight="normal" text-anchor="start"  stroke="#e8e8e8" stroke-width="0.25">Cross Filter</text>
<text x="1162" y="146.5" font-family="Liberation Sans" font-size="11.2" fill="#e8e8e8" font-weight="normal" text-anchor="end"  stroke="#e8e8e8" stroke-width="0.25">True</text>
<rect x="1169" y="133.5" width="33" height="15" rx="7.5" fill="#6b1f25"/>
<circle cx="1194" cy="141" r="4.3" fill="#fff"/>
<text x="895.6" y="178" font-family="Liberation Sans" font-size="11.2" fill="#e8e8e8" font-weight="normal" text-anchor="start"  stroke="#e8e8e8" stroke-width="0.25">Parameters</text>
<rect x="1015.5" y="160.5" width="186" height="26" fill="#323232" stroke="#8a8a8a" stroke-width="1"/>
<text x="1020" y="178" font-family="Liberation Sans" font-size="11.2" fill="#e8e8e8" font-weight="normal" text-anchor="start"  stroke="#e8e8e8" stroke-width="0.25">[0 items]</text>
<rect x="1180.5" y="168" width="14" height="1.1" fill="#e8e8e8" />
<rect x="1180.5" y="172.2" width="14" height="1.1" fill="#e8e8e8" />
<rect x="1180.5" y="176.4" width="14" height="1.1" fill="#e8e8e8" />
<rect x="1180.5" y="180.6" width="14" height="1.1" fill="#e8e8e8" />
<text x="895.6" y="208.9" font-family="Liberation Sans" font-size="11.2" fill="#e8e8e8" font-weight="normal" text-anchor="start"  stroke="#e8e8e8" stroke-width="0.25">Global Filters</text>
<rect x="1015.5" y="192.5" width="186" height="26" fill="#323232" stroke="#8a8a8a" stroke-width="1"/>
<text x="1020" y="210" font-family="Liberation Sans" font-size="11.2" fill="#e8e8e8" font-weight="normal" text-anchor="start"  stroke="#e8e8e8" stroke-width="0.25">[0 items]</text>
<rect x="1180.5" y="200" width="14" height="1.1" fill="#e8e8e8" />
<rect x="1180.5" y="204.2" width="14" height="1.1" fill="#e8e8e8" />
<rect x="1180.5" y="208.4" width="14" height="1.1" fill="#e8e8e8" />
<rect x="1180.5" y="212.6" width="14" height="1.1" fill="#e8e8e8" />
<text x="895.6" y="241" font-family="Liberation Sans" font-size="11.2" fill="#e8e8e8" font-weight="normal" text-anchor="start"  stroke="#e8e8e8" stroke-width="0.25">Pagination Visibility</text>
<text x="1162" y="241" font-family="Liberation Sans" font-size="11.2" fill="#e8e8e8" font-weight="normal" text-anchor="end"  stroke="#e8e8e8" stroke-width="0.25">True</text>
<rect x="1169" y="229.0" width="33" height="15" rx="7.5" fill="#6b1f25"/>
<circle cx="1194" cy="236.5" r="4.3" fill="#fff"/>
<text x="895.6" y="271.9" font-family="Liberation Sans" font-size="11.2" fill="#e8e8e8" font-weight="normal" text-anchor="start"  stroke="#e8e8e8" stroke-width="0.25">Auto Play</text>
<text x="1162" y="272.3" font-family="Liberation Sans" font-size="10.8" fill="#e8e8e8" font-weight="normal" text-anchor="end"  stroke="#e8e8e8" stroke-width="0.25">False</text>
<rect x="1170" y="261.0" width="31" height="13" rx="6.5" fill="none" stroke="#cfcfcf" stroke-width="2"/>
<circle cx="1177.3" cy="267.5" r="4.0" fill="#c2c2c2"/>
<text x="895.6" y="298" font-family="Liberation Sans" font-size="11.2" fill="#e8e8e8" font-weight="normal" text-anchor="start"  stroke="#e8e8e8" stroke-width="0.25">Prompt Using Mobile</text>
<text x="895.6" y="309.5" font-family="Liberation Sans" font-size="11.2" fill="#e8e8e8" font-weight="normal" text-anchor="start"  stroke="#e8e8e8" stroke-width="0.25">View</text>
<text x="1162" y="303.8" font-family="Liberation Sans" font-size="10.8" fill="#e8e8e8" font-weight="normal" text-anchor="end"  stroke="#e8e8e8" stroke-width="0.25">False</text>
<rect x="1170" y="292.5" width="31" height="13" rx="6.5" fill="none" stroke="#cfcfcf" stroke-width="2"/>
<circle cx="1177.3" cy="299" r="4.0" fill="#c2c2c2"/>
<text x="895.6" y="335.5" font-family="Liberation Sans" font-size="11.2" fill="#e8e8e8" font-weight="normal" text-anchor="start"  stroke="#e8e8e8" stroke-width="0.25">Pagination Style</text>
<rect x="1015.5" y="318.5" width="186" height="26" fill="#323232" stroke="#8a8a8a" stroke-width="1"/>
<text x="1020" y="335.9" font-family="Liberation Sans" font-size="11.2" fill="#e8e8e8" font-weight="normal" text-anchor="start"  stroke="#e8e8e8" stroke-width="0.25">Tabs</text>
<path d="M1182.5 328.5 L1187.5 333.5 L1192.5 328.5" fill="none" stroke="#e0e0e0" stroke-width="1.2"/>
<text x="895.6" y="367" font-family="Liberation Sans" font-size="11.2" fill="#e8e8e8" font-weight="normal" text-anchor="start"  stroke="#e8e8e8" stroke-width="0.25">Pagination Position</text>
<rect x="1015.5" y="349.5" width="186" height="26" fill="#323232" stroke="#8a8a8a" stroke-width="1"/>
<text x="1020" y="367.2" font-family="Liberation Sans" font-size="11.2" fill="#e8e8e8" font-weight="normal" text-anchor="start"  stroke="#e8e8e8" stroke-width="0.25">Bottom</text>
<path d="M1182.5 359.5 L1187.5 364.5 L1192.5 359.5" fill="none" stroke="#e0e0e0" stroke-width="1.2"/>
<text x="895.6" y="449" font-family="Liberation Sans" font-size="11.2" fill="#e8e8e8" font-weight="normal" text-anchor="start"  stroke="#e8e8e8" stroke-width="0.25">Theme</text>
<rect x="1015.5" y="431.5" width="186" height="26" fill="#323232" stroke="#8a8a8a" stroke-width="1"/>
<text x="1020" y="449" font-family="Liberation Sans" font-size="11.2" fill="#e8e8e8" font-weight="normal" text-anchor="start"  stroke="#e8e8e8" stroke-width="0.25">High Contrast</text>
<path d="M1182.5 441.5 L1187.5 446.5 L1192.5 441.5" fill="none" stroke="#e0e0e0" stroke-width="1.2"/>
<text x="895.6" y="480.3" font-family="Liberation Sans" font-size="11.2" fill="#e8e8e8" font-weight="normal" text-anchor="start"  stroke="#e8e8e8" stroke-width="0.25">Background Color</text>
<rect x="1134.5" y="465.5" width="44" height="22" fill="#323232" stroke="#8a8a8a" stroke-width="1"/>
<rect x="1136" y="467" width="41" height="19" fill="#ffffff" />
<rect x="1187" y="472" width="7" height="7" fill="#f2b600" />
<text x="895.6" y="512" font-family="Liberation Sans" font-size="11.2" fill="#e8e8e8" font-weight="normal" text-anchor="start"  stroke="#e8e8e8" stroke-width="0.25">Foreground Color</text>
<rect x="1134.5" y="497.5" width="44" height="21" fill="#323232" stroke="#8a8a8a" stroke-width="1"/>
<rect x="1136" y="499" width="41" height="18" fill="#000000" />
<rect x="1187" y="504" width="7" height="7" fill="#c0c0c0" />
<text x="895.6" y="543.5" font-family="Liberation Sans" font-size="11.2" fill="#e8e8e8" font-weight="normal" text-anchor="start"  stroke="#e8e8e8" stroke-width="0.25">Font</text>
<rect x="1015.5" y="526.5" width="186" height="26" fill="#323232" stroke="#8a8a8a" stroke-width="1"/>
<text x="1020" y="544" font-family="Liberation Sans" font-size="11.2" fill="#e8e8e8" font-weight="normal" text-anchor="start"  stroke="#e8e8e8" stroke-width="0.25">Default</text>
<path d="M1182.5 536.5 L1187.5 541.5 L1192.5 536.5" fill="none" stroke="#e0e0e0" stroke-width="1.2"/>
<text x="895.6" y="575" font-family="Liberation Sans" font-size="11.2" fill="#e8e8e8" font-weight="normal" text-anchor="start"  stroke="#e8e8e8" stroke-width="0.25">Title Font Size</text>
<rect x="1015.5" y="557.5" width="163" height="26" fill="#323232" stroke="#8a8a8a" stroke-width="1"/>
<text x="1020" y="574.8" font-family="Liberation Sans" font-size="11.2" fill="#e8e8e8" font-weight="normal" text-anchor="start"  stroke="#e8e8e8" stroke-width="0.25">15.6</text>
<rect x="1187" y="566.5" width="7" height="7" fill="#c0c0c0" />
<text x="895.6" y="606.5" font-family="Liberation Sans" font-size="11.2" fill="#e8e8e8" font-weight="normal" text-anchor="start"  stroke="#e8e8e8" stroke-width="0.25">Content Font Size</text>
<rect x="1015.5" y="589.5" width="163" height="26" fill="#323232" stroke="#8a8a8a" stroke-width="1"/>
<text x="1020" y="607" font-family="Liberation Sans" font-size="11.2" fill="#e8e8e8" font-weight="normal" text-anchor="start"  stroke="#e8e8e8" stroke-width="0.25">13</text>
<rect x="1187" y="598.3" width="7" height="7" fill="#c0c0c0" />
<rect x="14.2" y="62" width="3.7" height="8" fill="#f3e8e9" />
<rect x="18.5" y="58" width="3.5" height="12" fill="#f3e8e9" />
<rect x="22.7" y="60" width="3.5" height="10" fill="#f3e8e9" />
<rect x="12.2" y="71" width="16.2" height="1.9" fill="#f3e8e9" />
<rect x="13" y="106" width="6.7" height="6.2" fill="#f3e8e9" />
<circle cx="24.3" cy="109.1" r="3.3" fill="#f3e8e9"/>
<rect x="13" y="114" width="6.7" height="5.8" fill="#f3e8e9" />
<rect x="21" y="114" width="6.6" height="5.8" fill="#f3e8e9" />
<path d="M13.7 166.2 V155.9 H27.2 V160.5" fill="none" stroke="#f3e8e9" stroke-width="1.4"/>
<path d="M13.7 166.2 H20.5" fill="none" stroke="#f3e8e9" stroke-width="1.4"/>
<rect x="16" y="158" width="9.5" height="1.3" fill="#f3e8e9" />
<rect x="16" y="161.8" width="2" height="1.6" fill="#f3e8e9" />
<path d="M18.9 161.3 H27.6 L23.8 165.2 V169.2 L20.9 167.8 V165.2 Z" fill="#f3e8e9"/>
</svg></body></html>
